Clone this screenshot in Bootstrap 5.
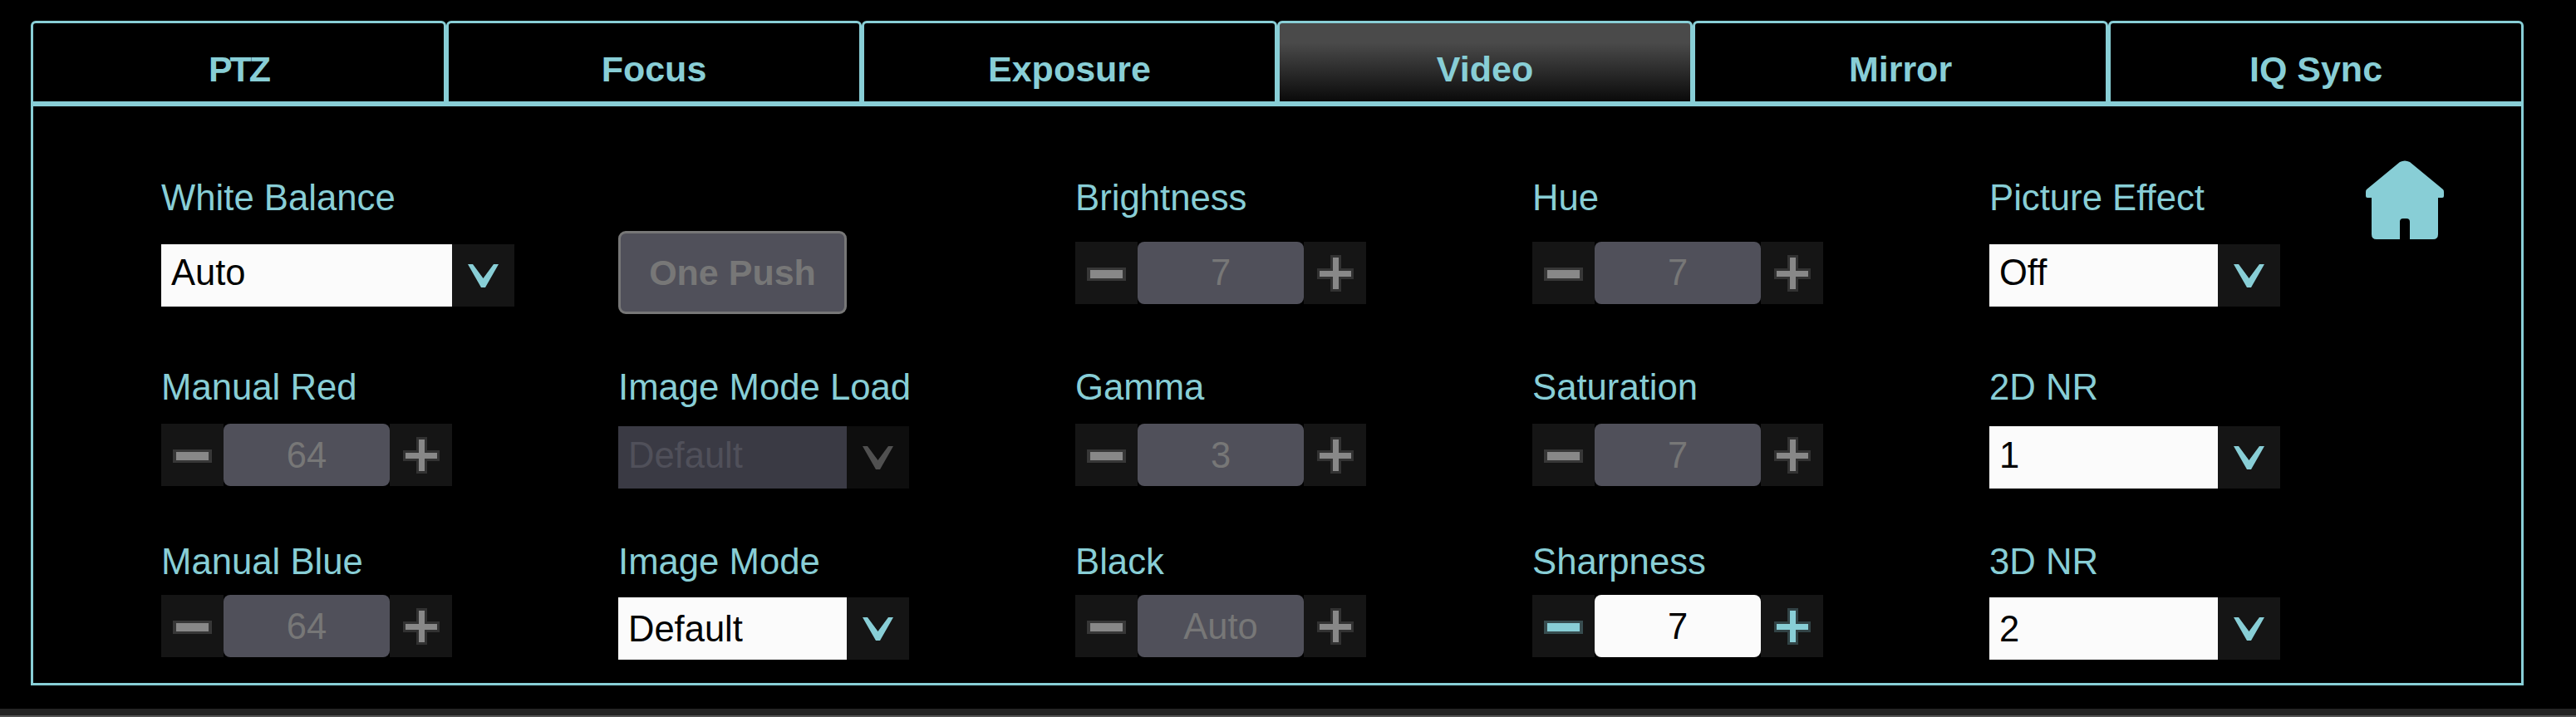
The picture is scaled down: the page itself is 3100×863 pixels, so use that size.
<!DOCTYPE html>
<html lang="en">
<head>
  <meta charset="UTF-8">
  <title>Camera Settings - Video</title>
  <link href="https://cdn.jsdelivr.net/npm/bootstrap@5.3.0/dist/css/bootstrap.min.css" rel="stylesheet">
  <style>
    body {
      background: #000;
      font-family: "Liberation Sans", Arial, sans-serif;
      height: 863px;
      overflow: hidden;
      display: flex;
      flex-direction: column;
    }
    .cam-wrap {
      width: 3000px;
      margin: 25px 0 0 37px;
    }
    .cam-tab {
      width: 500px;
      height: 100px;
      border: 3px solid #88ced6;
      border-radius: 6px 6px 0 0;
      background: #000;
      color: #88ced6;
      font-size: 43px;
      font-weight: 700;
      padding-top: 23px;
    }
    .cam-tab:first-child { letter-spacing: -3px; }
    .cam-tab.on {
      background: linear-gradient(#4a4a4a 0, #4a4a4a 25%, #0a0a0a 100%);
    }
    .cam-panel {
      height: 700px;
      border: 3px solid #88ced6;
      padding: 65px 0 0 154px;
    }
    .cam-row-1 { height: 248px; padding-top: 20px; --label-gap: 28px; --sel-line: 68px; --step-line: 74px; }
    .cam-row-2 { height: 210px; --label-gap: 19px; --sel-line: 70px; --step-line: 76px; }
    .cam-row-3 { --label-gap: 15px; --sel-line: 76px; --step-line: 76px; }
    .cam-cell { width: 550px; flex: none; }
    .cam-label {
      color: #88ced6;
      font-size: 43.7px;
      line-height: 50px;
      margin-bottom: var(--label-gap);
      white-space: nowrap;
    }
    .cam-select {
      margin-top: 3px;
      height: 75px;
      width: 350px;
    }
    .cam-select.wide { width: 425px; }
    .cam-select-val {
      flex: 1;
      background: #fbfbfb;
      color: #000;
      font-size: 43.5px;
      line-height: var(--sel-line);
      padding-left: 12px;
    }
    .cam-btn {
      width: 75px;
      height: 75px;
      flex: none;
      background: #151515;
      color: #88ced6;
    }
    .cam-select.off .cam-select-val { background: #3a3a44; color: #50505a; }
    .cam-select.off .cam-btn { background: #0e0e0e; color: #505050; }
    .cam-stepper { width: 350px; height: 75px; }
    .cam-step-val {
      width: 200px;
      background: #fbfbfb;
      color: #000;
      font-size: 43.5px;
      border-radius: 8px;
      line-height: var(--step-line);
    }
    .cam-stepper.off .cam-step-val { background: #50505a; color: #777; }
    .cam-stepper.off .cam-btn { color: #888; }
    .cam-minus { margin-top: 3px; }
    .cam-push {
      margin-top: 65px;
      width: 275px;
      height: 100px;
      background: #50505a;
      border: 3px solid #777;
      border-radius: 9px;
      color: #777;
      font-size: 43px;
      font-weight: 700;
      line-height: 94px;
    }
    .cam-home { margin: -20px 0 0 -97px; width: 94px; height: 95px; fill: #88ced6; }
    .cam-foot { margin-top: auto; height: 10px; background: #242424; border-bottom: 2px solid #555; }
  </style>
</head>
<body>
  <div class="cam-wrap">
    <div class="d-flex" id="tabs"></div>
    <div class="cam-panel" id="panel"></div>
  </div>
  <div class="cam-foot"></div>

  <script>
    const tabs = ['PTZ', 'Focus', 'Exposure', 'Video', 'Mirror', 'IQ Sync'];
    const chevron = '<svg width="37" height="28" viewBox="0 0 37 28" fill="currentColor"><path d="M0 0h6l12.500 17L31 0h6L21 28h-5z"/></svg>';
    // the soft edge of the glyphs in the picture is a second, fainter rect
    const minus = '<svg class="cam-minus" width="47" height="16" viewBox="0 0 47 16" fill="currentColor"><rect width="47" height="16" opacity=".3"/><rect x="4" y="3" width="39" height="10"/></svg>';
    const plus = '<svg width="44" height="44" viewBox="0 0 44 44" fill="currentColor"><g opacity=".25"><rect x="16" width="13" height="44"/><rect y="16" width="44" height="13"/></g><rect x="19" y="3" width="7" height="38"/><rect x="3" y="19" width="38" height="7"/></svg>';

    const select = (label, value, opts = {}) => `
      <div class="cam-cell d-flex flex-column">
        <div class="cam-label">${label}</div>
        <div class="cam-select d-flex ${opts.off ? 'off' : ''} ${opts.wide ? 'wide' : ''}">
          <div class="cam-select-val">${value}</div>
          <div class="cam-btn d-flex align-items-center justify-content-center">${chevron}</div>
        </div>
      </div>`;

    const stepper = (label, value, off = true) => `
      <div class="cam-cell">
        <div class="cam-label">${label}</div>
        <div class="cam-stepper d-flex ${off ? 'off' : ''}">
          <div class="cam-btn d-flex align-items-center justify-content-center">${minus}</div>
          <div class="cam-step-val text-center">${value}</div>
          <div class="cam-btn d-flex align-items-center justify-content-center">${plus}</div>
        </div>
      </div>`;

    document.getElementById('tabs').innerHTML = tabs.map(t =>
      `<div class="cam-tab text-center ${t === 'Video' ? 'on' : ''}">${t}</div>`).join('');

    document.getElementById('panel').innerHTML = `
      <div class="d-flex cam-row-1">
        ${select('White Balance', 'Auto', { wide: true })}
        <div class="cam-cell"><div class="cam-push text-center">One Push</div></div>
        ${stepper('Brightness', 7)}
        ${stepper('Hue', 7)}
        ${select('Picture Effect', 'Off')}
        <svg class="cam-home" viewBox="0 0 94 95"><path d="M41 2q6-3 12 0L93 35q1 1 1 3v5q0 2-2 2h-5v44q0 6-6 6H53V74q0-4-4-4h-4q-4 0-4 4v21H13q-6 0-6-6V45H2q-2 0-2-2v-5q0-2 1-3z"/></svg>
      </div>
      <div class="d-flex cam-row-2">
        ${stepper('Manual Red', 64)}
        ${select('Image Mode Load', 'Default', { off: true })}
        ${stepper('Gamma', 3)}
        ${stepper('Saturation', 7)}
        ${select('2D NR', '1')}
      </div>
      <div class="d-flex cam-row-3">
        ${stepper('Manual Blue', 64)}
        ${select('Image Mode', 'Default')}
        ${stepper('Black', 'Auto')}
        ${stepper('Sharpness', 7, false)}
        ${select('3D NR', '2')}
      </div>`;
  </script>
  <script src="https://cdn.jsdelivr.net/npm/bootstrap@5.3.0/dist/js/bootstrap.bundle.min.js"></script>
</body>
</html>
